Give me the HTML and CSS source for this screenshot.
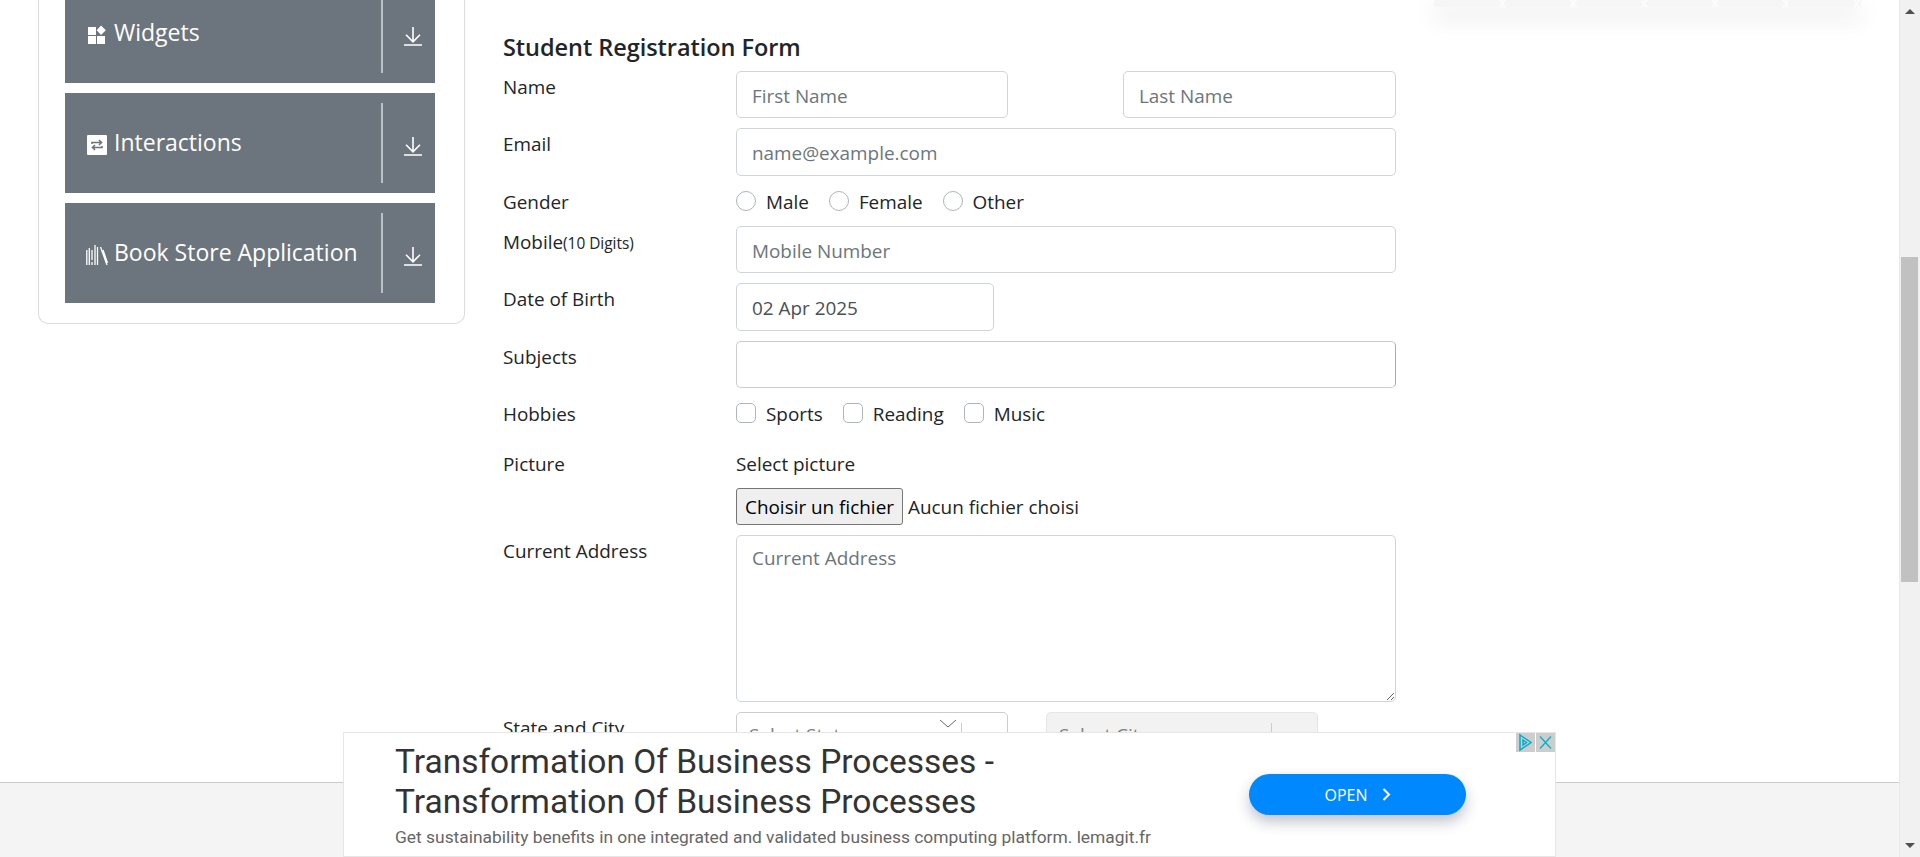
FILE: index.html
```html
<!DOCTYPE html>
<html lang="en">
<head>
    <meta charset="UTF-8">
    <title>Student Registration Form</title>
    <link rel="stylesheet" href="styles.css">
</head>
<body>
    <div class="page">
        <!-- Linke Navigation -->
        <aside class="sidebar">
            <div class="menu-card">
                <div class="menu-item menu-item-cut">
                    <div class="menu-label menu-label-cut">
                        <svg class="menu-icon" viewBox="0 0 22 20"><path fill="#fff" d="M2 2h8v8H2zM2 11h8v8H2zM11 11h8v8h-8zM15 .5l4.800 4.800-4.800 4.800-4.300-4.800z"/></svg>
                        <span>Widgets</span>
                    </div>
                    <div class="menu-arrow">
                        <svg viewBox="0 0 18 19"><path fill="none" stroke="#fff" stroke-width="1.600" d="M9 0v14.500M2 7.800l7 7 7-7M0 18h18"/></svg>
                    </div>
                </div>
                <div class="menu-item">
                    <div class="menu-label">
                        <svg class="menu-icon" viewBox="0 0 22 20"><rect x="1" y="0" width="20" height="20" rx="1" fill="#fff"/><path fill="none" stroke="#6c757d" stroke-width="1.600" d="M6 9V7.500h9M13 5l2.500 2.500L13 10M16 11v1.500H7M9 10l-2.500 2.500L9 15"/></svg>
                        <span>Interactions</span>
                    </div>
                    <div class="menu-arrow">
                        <svg viewBox="0 0 18 19"><path fill="none" stroke="#fff" stroke-width="1.600" d="M9 0v14.500M2 7.800l7 7 7-7M0 18h18"/></svg>
                    </div>
                </div>
                <div class="menu-item">
                    <div class="menu-label">
                        <svg class="menu-icon" viewBox="0 0 22 20"><path fill="none" stroke="#fff" stroke-width="1.300" d="M.8 5v15M3.300 3v17M6 5v10M6 17v3M9 0v20M11.500 2v18M14.500 2l6.500 18M17 5l4.500 13"/></svg>
                        <span>Book Store Application</span>
                    </div>
                    <div class="menu-arrow">
                        <svg viewBox="0 0 18 19"><path fill="none" stroke="#fff" stroke-width="1.600" d="M9 0v14.500M2 7.800l7 7 7-7M0 18h18"/></svg>
                    </div>
                </div>
            </div>
        </aside>

        <!-- Formular -->
        <main class="content">
            <h1 class="form-title">Student Registration Form</h1>
            <form class="form">
                <div class="row">
                    <label class="row-label">Name</label>
                    <div class="row-split">
                        <input class="field field-first" type="text" placeholder="First Name">
                        <input class="field field-last" type="text" placeholder="Last Name">
                    </div>
                </div>
                <div class="row">
                    <label class="row-label">Email</label>
                    <input class="field field-tall" type="text" placeholder="name@example.com">
                </div>
                <div class="row row-choice">
                    <label class="row-label">Gender</label>
                    <div class="choices">
                        <label class="choice"><input class="radio" type="radio" name="gender"><span class="choice-text">Male</span></label>
                        <label class="choice"><input class="radio" type="radio" name="gender"><span class="choice-text">Female</span></label>
                        <label class="choice"><input class="radio" type="radio" name="gender"><span class="choice-text">Other</span></label>
                    </div>
                </div>
                <div class="row">
                    <label class="row-label">Mobile<small class="hint">(10 Digits)</small></label>
                    <input class="field" type="text" placeholder="Mobile Number">
                </div>
                <div class="row">
                    <label class="row-label">Date of Birth</label>
                    <input class="field field-date field-tall" type="text" value="02 Apr 2025">
                </div>
                <div class="row">
                    <label class="row-label">Subjects</label>
                    <div class="field field-subjects"></div>
                </div>
                <div class="row row-choice">
                    <label class="row-label">Hobbies</label>
                    <div class="choices">
                        <label class="choice"><input class="check" type="checkbox"><span class="choice-text">Sports</span></label>
                        <label class="choice"><input class="check" type="checkbox"><span class="choice-text">Reading</span></label>
                        <label class="choice"><input class="check" type="checkbox"><span class="choice-text">Music</span></label>
                    </div>
                </div>
                <div class="row row-picture">
                    <label class="row-label">Picture</label>
                    <div class="picture">
                        <div class="picture-title">Select picture</div>
                        <div class="file">
                            <button class="file-btn" type="button">Choisir un fichier</button>
                            <span>Aucun fichier choisi</span>
                        </div>
                    </div>
                </div>
                <div class="row">
                    <label class="row-label">Current Address</label>
                    <textarea class="field field-area" placeholder="Current Address"></textarea>
                </div>
                <div class="row">
                    <label class="row-label">State and City</label>
                    <div class="row-split row-split-select">
                        <div class="select">
                            <span>Select State</span>
                            <svg class="select-chevron" viewBox="0 0 18 9"><path fill="none" stroke="#666" stroke-width="1" d="M1 1l8 7 8-7"/></svg>
                            <i class="select-sep"></i>
                        </div>
                        <div class="select select-off">
                            <span>Select City</span>
                            <i class="select-sep"></i>
                        </div>
                    </div>
                </div>
            </form>
        </main>

        <aside class="side-right">
            <div class="side-ad"></div>
        </aside>
    </div>

    <!-- Footer und Werbung liegen über der Seite -->
    <div class="footer"></div>
    <div class="ad">
        <div class="ad-text">
            <div class="ad-title">Transformation Of Business Processes - Transformation Of Business Processes</div>
            <div class="ad-desc">Get sustainability benefits in one integrated and validated business computing platform. lemagit.fr</div>
        </div>
        <div class="ad-btn">OPEN
            <svg viewBox="0 0 9 13"><path fill="none" stroke="#fff" stroke-width="2" d="M1.500 1l5.500 5.500-5.500 5.500"/></svg>
        </div>
        <div class="ad-flags">
            <span class="ad-flag"><svg viewBox="0 0 19 19"><path fill="none" stroke="#00aecd" stroke-width="1.500" d="M4 2l11 7.500L4 17zM7 7l3.500 2.500L7 12z"/></svg></span>
            <span class="ad-flag"><svg viewBox="0 0 19 19"><path fill="none" stroke="#00aecd" stroke-width="1.200" d="M4 3.500l11 12M15 3.500l-11 12"/></svg></span>
        </div>
    </div>

    <div class="scrollbar">
        <span class="scroll-up"></span>
        <span class="scroll-thumb"></span>
        <span class="scroll-down"></span>
    </div>
</body>
</html>
```

FILE: styles.css
```css
html, body {
    margin: 0;
    height: 857px;
    overflow: hidden;
    background-color: #fff;
}
body {
    font-family: "Open Sans", sans-serif;
    font-size: 18.9px;
    color: #212529;
}
.page {
    display: flex;
    width: 1899px;
    height: 857px;
    overflow: hidden;
}

/* Sidebar */
.sidebar {
    width: 465px;
    padding-left: 38px;
    box-sizing: border-box;
    flex-shrink: 0;
}
.menu-card {
    width: 427px;
    box-sizing: border-box;
    padding: 0 29px 20px 26px;
    border: 1px solid #dcdcdc;
    border-top: none;
    border-radius: 0 0 10px 10px;
}
.menu-item {
    display: flex;
    justify-content: space-between;
    height: 100px;
    margin-top: 10px;
    background-color: #6c757d;
    color: #fff;
}
.menu-item-cut {
    height: 83px;
    margin-top: 0;
}
.menu-label {
    flex: 1;
    display: flex;
    align-items: center;
    padding-left: 21px;
    padding-bottom: 2px;
    font-size: 23px;
    margin: 10px 0;
    border-right: 2px solid #bcbfc3;
}
.menu-label-cut {
    margin-top: 0;
    padding-bottom: 9px;
    height: 64px;
}
.menu-icon {
    width: 22px;
    height: 20px;
    margin-right: 6px;
    margin-top: 5px;
    flex-shrink: 0;
}
.menu-arrow {
    width: 52px;
    display: flex;
    align-items: center;
    justify-content: center;
    padding-top: 7px;
    padding-left: 8px;
    box-sizing: border-box;
}
.menu-item-cut .menu-arrow {
    padding-top: 0;
    padding-bottom: 11px;
}
.menu-arrow svg {
    width: 18px;
    height: 19px;
}

/* Formular */
.content {
    width: 893px;
    margin-left: 38px;
    flex-shrink: 0;
}
.form-title {
    margin: 30px 0 0;
    height: 41px;
    line-height: 34px;
    font-size: 23.500px;
    font-weight: 600;
    letter-spacing: -0.05px;
}
.form {
    display: flex;
    flex-direction: column;
    gap: 10px;
}
.row {
    display: flex;
    align-items: flex-start;
}
.row-label {
    width: 233px;
    flex-shrink: 0;
    line-height: 30px;
    padding-top: 1px;
}
.hint {
    font-size: 15.400px;
}
.field {
    display: block;
    width: 660px;
    height: 47px;
    box-sizing: border-box;
    padding: 2px 15px 0;
    border: 1px solid #ced4da;
    border-radius: 5px;
    font-family: inherit;
    font-size: 18.9px;
    color: #495057;
    background-color: #fff;
}
.field::placeholder {
    color: #6c757d;
    opacity: 1;
}
.field-tall {
    height: 48px;
    padding-top: 1px;
}
.row-split {
    display: flex;
    justify-content: space-between;
    width: 660px;
}
.field-first {
    width: 272px;
}
.field-last {
    width: 273px;
}
.field-date {
    width: 258px;
}
.field-subjects {
    border-color: #ccc;
    border-right-color: #aaa;
}
.field-area {
    height: 167px;
    padding-top: 9px;
}

.row-choice {
    height: 30px;
}
.choices {
    display: flex;
    align-items: center;
    height: 30px;
    gap: 20px;
}
.choice {
    display: flex;
    align-items: center;
}
.choice-text {
    padding-top: 1px;
}
.radio, .check {
    appearance: none;
    width: 20px;
    height: 20px;
    margin: 0 10px 0 0;
    border: 1px solid #adb5bd;
    background-color: #fff;
}
.radio {
    border-radius: 50%;
}
.check {
    border-radius: 5px;
}
.row-picture {
    height: 87px;
}
.row-picture .row-label {
    padding-top: 11px;
}
.picture-title {
    padding-top: 11px;
    line-height: 30px;
}
.file {
    display: flex;
    align-items: center;
    margin-top: 9px;
    gap: 5px;
}
.file-btn {
    width: 167px;
    height: 37px;
    padding: 0;
    border: 1px solid #767676;
    border-radius: 3px;
    background-color: #efefef;
    font-family: inherit;
    font-size: 18.9px;
    color: #000;
}
.select {
    position: relative;
    width: 272px;
    height: 47px;
    box-sizing: border-box;
    padding: 9px 12px 0;
    border: 1px solid #ccc;
    border-radius: 5px;
    font-size: 18.9px;
    color: #808080;
}
.select-off {
    background-color: #f2f2f2;
    border-color: #e6e6e6;
}
.row-split-select {
    width: 582px;
}
.select-chevron {
    position: absolute;
    top: 6px;
    right: 50px;
    width: 18px;
    height: 9px;
}
.select-sep {
    position: absolute;
    top: 10px;
    right: 45px;
    height: 28px;
    border-left: 1px solid #ccc;
}

/* Rechte Spalte */
.side-right {
    margin-left: 37px;
    width: 428px;
    flex-shrink: 0;
}
.side-ad {
    height: 7px;
    background-color: #f6f6f6;
    background-image: repeating-linear-gradient(125deg, #fcfcfc 0, #fcfcfc 2px, transparent 2px, transparent 58px), repeating-linear-gradient(55deg, #fcfcfc 0, #fcfcfc 2px, transparent 2px, transparent 58px);
    box-shadow: 0 10px 25px rgba(0, 0, 0, 0.15);
}

/* Footer und Werbung */
.footer {
    position: fixed;
    left: 0;
    right: 21px;
    top: 782px;
    bottom: 0;
    background-color: #f4f4f4;
    border-top: 1px solid #ccc;
}
.ad {
    position: fixed;
    left: 343px;
    top: 732px;
    width: 1213px;
    height: 125px;
    box-sizing: border-box;
    border: 1px solid #e6e6e6;
    background-color: #fff;
}
.ad-text {
    width: 830px;
    padding: 9px 0 0 51px;
}
.ad-title {
    width: 650px;
    font-family: Roboto, sans-serif;
    font-size: 33.500px;
    line-height: 40px;
    color: #333;
}
.ad-desc {
    margin-top: 4px;
    font-family: Roboto, sans-serif;
    font-size: 17.400px;
    line-height: 22px;
    color: #666;
    white-space: nowrap;
}
.ad-btn {
    position: absolute;
    left: 905px;
    top: 41px;
    width: 217px;
    height: 41px;
    display: flex;
    align-items: center;
    justify-content: center;
    gap: 14px;
    border-radius: 21px;
    background-color: #0088ff;
    color: #fff;
    font-size: 16px;
    box-shadow: 0 7px 14px rgba(50, 60, 90, 0.3);
}
.ad-btn svg {
    width: 9px;
    height: 13px;
}
.ad-flags {
    position: absolute;
    top: 0;
    right: 0;
    display: flex;
    gap: 1px;
}
.ad-flag {
    width: 19px;
    height: 19px;
    background-color: #cdcdcd;
}
.ad-flag svg {
    display: block;
    width: 19px;
    height: 19px;
}

/* Scrollbar */
.scrollbar {
    position: fixed;
    top: 0;
    right: 0;
    width: 21px;
    height: 857px;
    box-sizing: border-box;
    border-left: 1px solid #e8e8e8;
    background-color: #f1f1f1;
}
.scroll-thumb {
    position: absolute;
    left: 1px;
    top: 257px;
    width: 17px;
    height: 325px;
    background-color: #c1c1c1;
}
.scroll-up, .scroll-down {
    position: absolute;
    left: 5px;
    width: 0;
    height: 0;
    border-left: 5px solid transparent;
    border-right: 5px solid transparent;
}
.scroll-up {
    top: 9px;
    border-bottom: 5px solid #505050;
}
.scroll-down {
    bottom: 9px;
    border-top: 5px solid #505050;
}
```
